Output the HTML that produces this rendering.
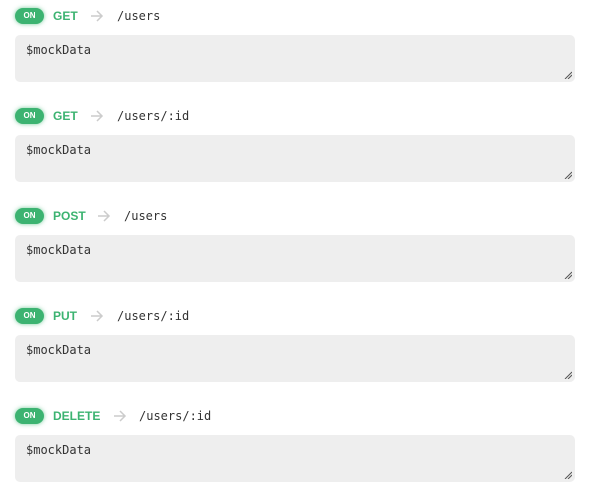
<!DOCTYPE html>
<html><head><style>
body{margin:0;background:#fff;width:590px;height:496px;overflow:hidden;font-family:"Liberation Sans",sans-serif}
.row{position:absolute;left:0;width:590px;height:100px}
.tog{position:absolute;left:15px;top:8px;width:29px;height:16px;border-radius:8px;background:#3cb371;box-shadow:0 0 4px rgba(60,179,113,.7);color:#fff;font-size:8px;font-weight:bold;line-height:16px;text-align:center}
.m{position:absolute;left:53px;top:8px;font-size:12px;font-weight:bold;color:#3cb371;line-height:16px}
.ar{position:absolute;top:10px}
.p{position:absolute;top:8px;line-height:16px;font-family:"DejaVu Sans Mono","Liberation Mono",monospace;font-size:12px;color:#333}
.ta{position:absolute;left:15px;top:35px;width:560px;height:47px;background:#eee;border-radius:5px}
.ta span{position:absolute;left:11px;top:8px;font-family:"DejaVu Sans Mono","Liberation Mono",monospace;font-size:12px;color:#333}
.ta svg{position:absolute;right:3px;bottom:3px}
</style></head><body>
<div class="row" style="top:0"><div class="tog">ON</div><div class="m">GET</div><svg class="ar" style="left:90px" width="14" height="12"><path d="M1 6H12M7 1L12 6L7 11" fill="none" stroke="#ccc" stroke-width="1.5"/></svg><div class="p" style="left:117px">/users</div><div class="ta"><span>$mockData</span><svg width="8" height="8"><path d="M1 8L8 1M4 8L8 4" stroke="#555" stroke-width="1"/></svg></div></div>
<div class="row" style="top:100px"><div class="tog">ON</div><div class="m">GET</div><svg class="ar" style="left:90px" width="14" height="12"><path d="M1 6H12M7 1L12 6L7 11" fill="none" stroke="#ccc" stroke-width="1.5"/></svg><div class="p" style="left:117px">/users/:id</div><div class="ta"><span>$mockData</span><svg width="8" height="8"><path d="M1 8L8 1M4 8L8 4" stroke="#555" stroke-width="1"/></svg></div></div>
<div class="row" style="top:200px"><div class="tog">ON</div><div class="m">POST</div><svg class="ar" style="left:97px" width="14" height="12"><path d="M1 6H12M7 1L12 6L7 11" fill="none" stroke="#ccc" stroke-width="1.5"/></svg><div class="p" style="left:124px">/users</div><div class="ta"><span>$mockData</span><svg width="8" height="8"><path d="M1 8L8 1M4 8L8 4" stroke="#555" stroke-width="1"/></svg></div></div>
<div class="row" style="top:300px"><div class="tog">ON</div><div class="m">PUT</div><svg class="ar" style="left:90px" width="14" height="12"><path d="M1 6H12M7 1L12 6L7 11" fill="none" stroke="#ccc" stroke-width="1.5"/></svg><div class="p" style="left:117px">/users/:id</div><div class="ta"><span>$mockData</span><svg width="8" height="8"><path d="M1 8L8 1M4 8L8 4" stroke="#555" stroke-width="1"/></svg></div></div>
<div class="row" style="top:400px"><div class="tog">ON</div><div class="m">DELETE</div><svg class="ar" style="left:113px" width="14" height="12"><path d="M1 6H12M7 1L12 6L7 11" fill="none" stroke="#ccc" stroke-width="1.5"/></svg><div class="p" style="left:139px">/users/:id</div><div class="ta"><span>$mockData</span><svg width="8" height="8"><path d="M1 8L8 1M4 8L8 4" stroke="#555" stroke-width="1"/></svg></div></div>
</body></html>
